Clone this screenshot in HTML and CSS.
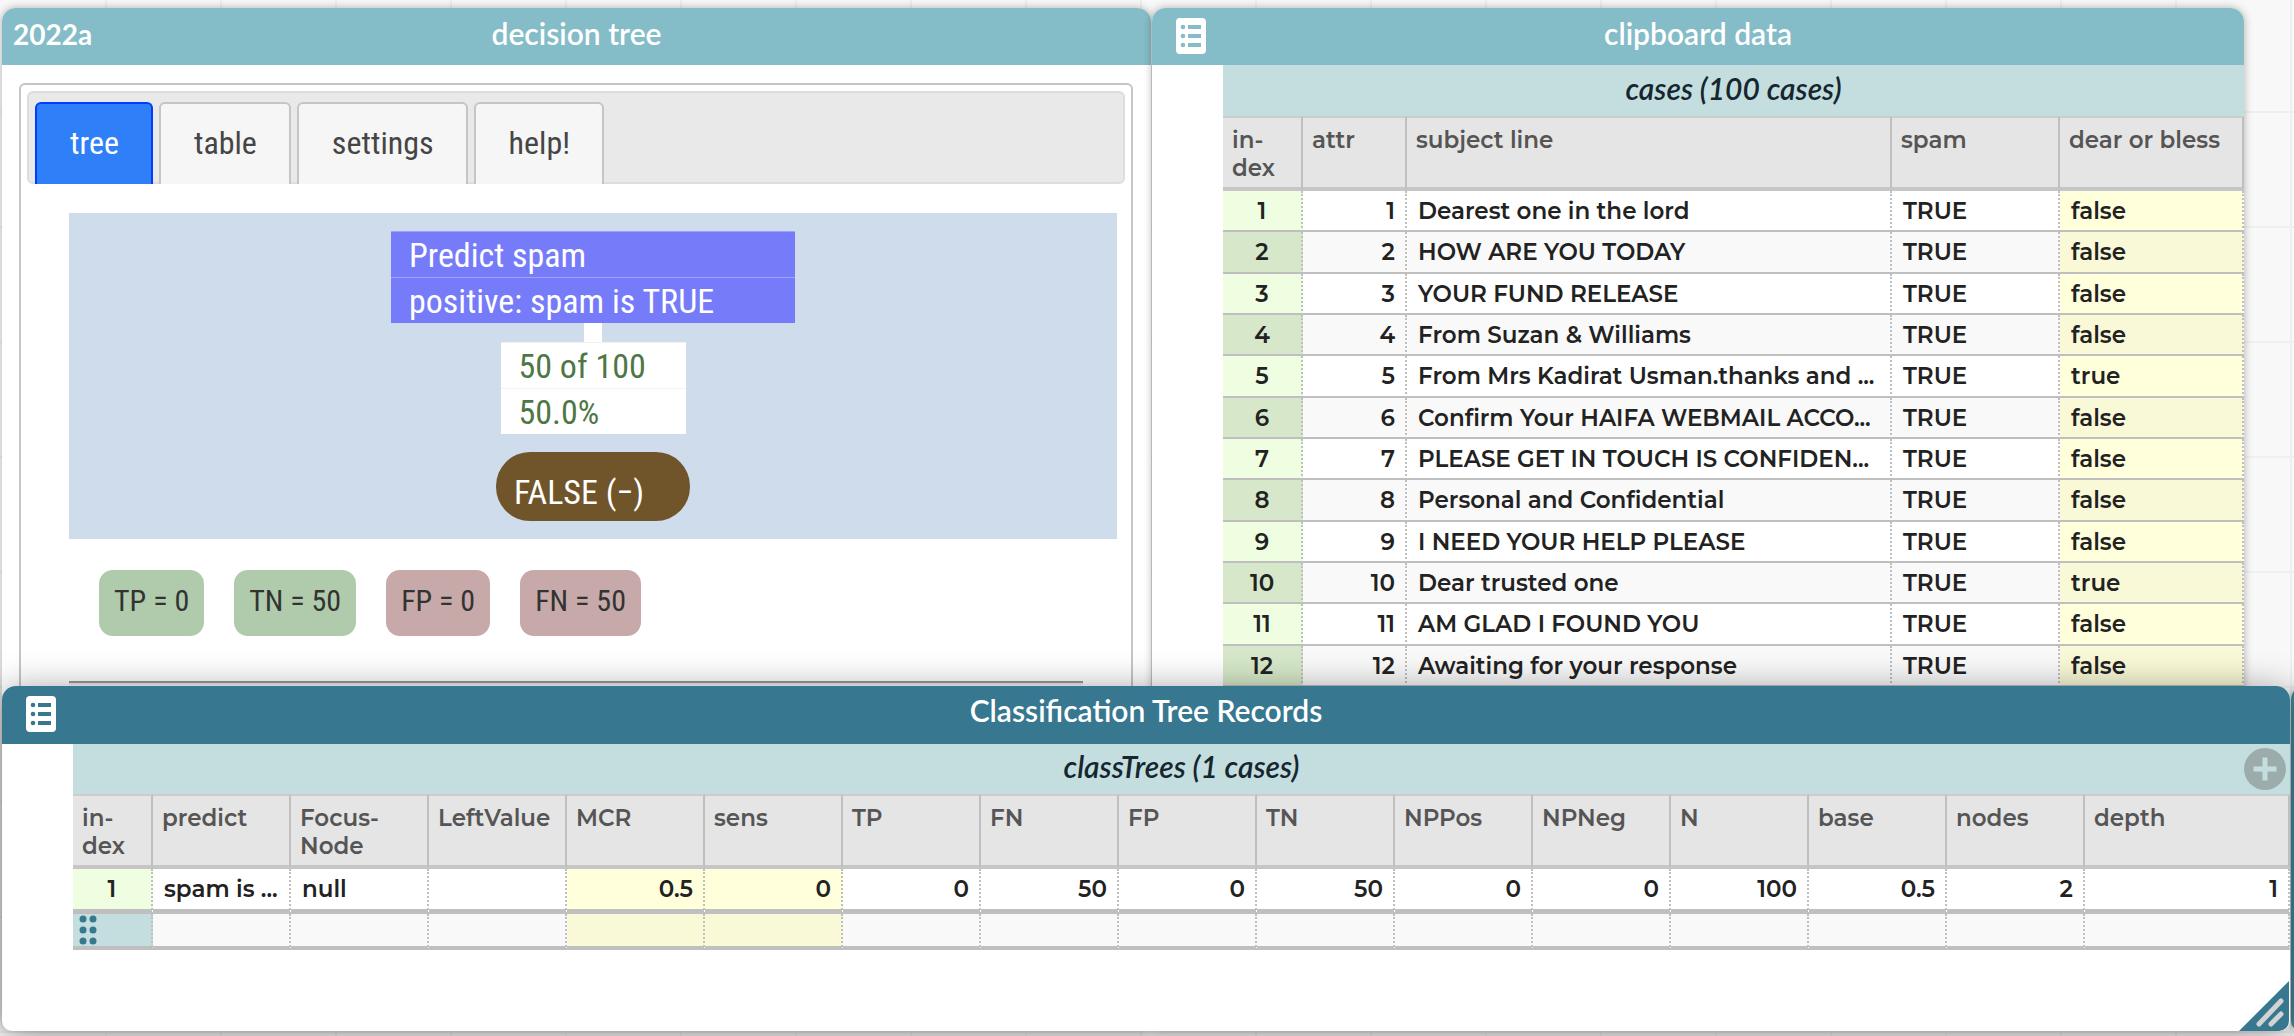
FILE: index.html
```html
<!DOCTYPE html>
<html lang="en">
<head>
<meta charset="utf-8">
<title>decision tree</title>
<link rel="stylesheet" href="styles.css">
</head>
<body>
<main class="desk">

  <section class="window window-tree">
    <header class="titlebar"><span class="version">2022a</span><h2 class="title">decision tree</h2></header>
    <div class="plugin">
      <div class="plugin-frame">
        <nav class="tabs">
          <button class="tab tab-on" type="button">tree</button>
          <button class="tab" type="button">table</button>
          <button class="tab" type="button">settings</button>
          <button class="tab" type="button">help!</button>
        </nav>
        <div class="tree">
          <div class="node-root"><div class="node-line">Predict spam</div><div class="node-line">positive: spam is TRUE</div></div>
          <div class="stem"></div>
          <div class="node-count"><div class="node-line">50 of 100</div><div class="node-line">50.0%</div></div>
          <div class="leaf">FALSE (−)</div>
        </div>
        <div class="chips">
          <span class="chip chip-good">TP = 0</span>
          <span class="chip chip-good">TN = 50</span>
          <span class="chip chip-bad">FP = 0</span>
          <span class="chip chip-bad">FN = 50</span>
        </div>
        <hr class="rule">
      </div>
    </div>
  </section>

  <section class="window window-data">
    <header class="titlebar">
      <button class="card-button" type="button" aria-label="Switch to case card">
        <svg width="30" height="36" viewBox="0 0 30 36"><rect width="30" height="36" rx="4" fill="#fff"/><g fill="currentColor"><circle cx="7" cy="9" r="2.300"/><circle cx="7" cy="18" r="2.300"/><circle cx="7" cy="27" r="2.300"/><path d="M12 7h13v4H12zM12 16h13v4H12zM12 25h13v4H12z"/></g></svg>
      </button>
      <h2 class="title">clipboard data</h2>
    </header>
    <div class="sheet">
      <div class="collection">cases (100 cases)</div>
      <table class="grid grid-cases">
        <colgroup><col class="c-index"><col class="c-attr"><col><col class="c-spam"><col class="c-dear"></colgroup>
        <thead><tr><th>in-<br>dex</th><th>attr</th><th>subject line</th><th>spam</th><th>dear or bless</th></tr></thead>
        <tbody>
          <tr><td class="idx">1</td><td class="num">1</td><td>Dearest one in the lord</td><td>TRUE</td><td class="calc">false</td></tr>
          <tr><td class="idx">2</td><td class="num">2</td><td>HOW ARE YOU TODAY</td><td>TRUE</td><td class="calc">false</td></tr>
          <tr><td class="idx">3</td><td class="num">3</td><td>YOUR FUND RELEASE</td><td>TRUE</td><td class="calc">false</td></tr>
          <tr><td class="idx">4</td><td class="num">4</td><td>From Suzan &amp; Williams</td><td>TRUE</td><td class="calc">false</td></tr>
          <tr><td class="idx">5</td><td class="num">5</td><td>From Mrs Kadirat Usman.thanks and ...</td><td>TRUE</td><td class="calc">true</td></tr>
          <tr><td class="idx">6</td><td class="num">6</td><td>Confirm Your HAIFA WEBMAIL ACCO...</td><td>TRUE</td><td class="calc">false</td></tr>
          <tr><td class="idx">7</td><td class="num">7</td><td>PLEASE GET IN TOUCH IS CONFIDEN...</td><td>TRUE</td><td class="calc">false</td></tr>
          <tr><td class="idx">8</td><td class="num">8</td><td>Personal and Confidential</td><td>TRUE</td><td class="calc">false</td></tr>
          <tr><td class="idx">9</td><td class="num">9</td><td>I NEED YOUR HELP PLEASE</td><td>TRUE</td><td class="calc">false</td></tr>
          <tr><td class="idx">10</td><td class="num">10</td><td>Dear trusted one</td><td>TRUE</td><td class="calc">true</td></tr>
          <tr><td class="idx">11</td><td class="num">11</td><td>AM GLAD I FOUND YOU</td><td>TRUE</td><td class="calc">false</td></tr>
          <tr><td class="idx">12</td><td class="num">12</td><td>Awaiting for your response</td><td>TRUE</td><td class="calc">false</td></tr>
        </tbody>
      </table>
    </div>
  </section>

  <section class="window window-edge"><header class="titlebar"></header></section>

  <section class="window window-records">
    <header class="titlebar">
      <button class="card-button" type="button" aria-label="Switch to case card">
        <svg width="30" height="36" viewBox="0 0 30 36"><rect width="30" height="36" rx="4" fill="#fff"/><g fill="currentColor"><circle cx="7" cy="9" r="2.300"/><circle cx="7" cy="18" r="2.300"/><circle cx="7" cy="27" r="2.300"/><path d="M12 7h13v4H12zM12 16h13v4H12zM12 25h13v4H12z"/></g></svg>
      </button>
      <h2 class="title">Classification Tree Records</h2>
    </header>
    <div class="sheet">
      <div class="collection">classTrees (1 cases)
        <button class="add" type="button" aria-label="Add attribute">
          <svg width="42" height="42" viewBox="0 0 42 42"><circle cx="21" cy="21" r="21" fill="#9cacac"/><path d="M21 9.500v23M9.500 21h23" stroke="#c4dedf" stroke-width="5"/></svg>
        </button>
      </div>
      <table class="grid grid-records">
        <colgroup><col class="c-index"><col class="c-std" span="14"><col></colgroup>
        <thead><tr><th>in-<br>dex</th><th>predict</th><th>Focus-<br>Node</th><th>LeftValue</th><th>MCR</th><th>sens</th><th>TP</th><th>FN</th><th>FP</th><th>TN</th><th>NPPos</th><th>NPNeg</th><th>N</th><th>base</th><th>nodes</th><th>depth</th></tr></thead>
        <tbody>
          <tr><td class="idx">1</td><td>spam is ...</td><td>null</td><td></td><td class="num calc">0.5</td><td class="num calc">0</td><td class="num">0</td><td class="num">50</td><td class="num">0</td><td class="num">50</td><td class="num">0</td><td class="num">0</td><td class="num">100</td><td class="num">0.5</td><td class="num">2</td><td class="num">1</td></tr>
          <tr class="input-row"><td class="grip"><svg width="18" height="28" viewBox="0 0 18 28" fill="#37778f"><circle cx="4" cy="3" r="3.500"/><circle cx="14" cy="3" r="3.500"/><circle cx="4" cy="14" r="3.500"/><circle cx="14" cy="14" r="3.500"/><circle cx="4" cy="25" r="3.500"/><circle cx="14" cy="25" r="3.500"/></svg></td><td></td><td></td><td></td><td class="calc"></td><td class="calc"></td><td></td><td></td><td></td><td></td><td></td><td></td><td></td><td></td><td></td><td></td></tr>
        </tbody>
      </table>
    </div>
    <svg class="resize" width="50" height="50" viewBox="0 0 50 50"><path d="M50 0v40a10 10 0 0 1-10 10H0z" fill="#37778f"/><path d="M20 43L42 20M32 43L42 33" stroke="#d3d3d3" stroke-width="5" stroke-linecap="round"/></svg>
  </section>

</main>
</body>
</html>
```
FILE: styles.css
```css
* { box-sizing: border-box; }
body { margin: 0; font-family: Montserrat, Inter, sans-serif; }

.desk {
  position: relative;
  height: 100vh;
  overflow: hidden;
  background-color: #f8f8f8;
  background-image:
    linear-gradient(90deg, #efefef 2px, transparent 2px),
    linear-gradient(#efefef 2px, transparent 2px);
  background-size: 115px 115px;
  background-position: 105px 111px;
}

/* windows on the canvas */
.window {
  position: absolute;
  background: #fff;
  border-radius: 14px 14px 10px 10px;
  box-shadow: 0 0 8px rgba(0, 0, 0, .3);
}
.window-tree { left: 2px; top: 8px; width: 1149px; bottom: 8px; }
.window-data { left: 1152px; top: 8px; width: 1092px; bottom: 8px; }
.window-records { left: 2px; top: 686px; right: 4px; bottom: 5px; box-shadow: 0 4px 36px rgba(0, 0, 0, .4); }
.window-edge { left: calc(100% - 3px); top: 686px; width: 300px; bottom: 5px; background: #3a879b; }

.titlebar {
  position: relative;
  display: flex;
  align-items: center;
  justify-content: center;
  height: 57px;
  padding-bottom: 8px;
  border-radius: 14px 14px 0 0;
  background: #84bcc8;
  color: #fff;
}
.window-records .titlebar, .window-edge .titlebar { height: 58px; padding-bottom: 10px; background: #37778f; }
.window-edge .titlebar { background: #3a879b; }
.title { margin: 0; font: 600 30px/34px "Museo Sans", Lato, sans-serif; }
.version { position: absolute; left: 11px; top: 9px; font: 700 28px/34px "Museo Sans", Lato, sans-serif; }
.card-button {
  position: absolute;
  left: 24px;
  top: 10px;
  display: flex;
  padding: 0;
  border: 0;
  background: none;
  color: #84bcc8;
}
.window-records .card-button { color: #37778f; }

/* decision tree plugin */
.plugin { padding: 18px 18px 0 17px; font-family: "Roboto Condensed", "Liberation Sans Narrow", Roboto, sans-serif; }
.plugin-frame { padding: 6px; height: 640px; border: 2px solid #c5c5c5; border-radius: 6px; }
.tabs {
  display: flex;
  gap: 6px;
  height: 93px;
  padding: 9px 6px 0;
  border: 2px solid #ddd;
  border-radius: 6px;
  background: #e9e9e9;
}
.tab {
  height: 82px;
  padding: 0 32px 2px 33px;
  border: 2px solid #c5c5c5;
  border-bottom: 0;
  border-radius: 6px 6px 0 0;
  background: #f6f6f6;
  color: #454545;
  font: 400 32px/38px "Roboto Condensed", "Liberation Sans Narrow", Roboto, sans-serif;
}
.tab-on { border-color: #003eff; background: #2f80f8; color: #fff; }
.tree {
  display: flex;
  flex-direction: column;
  align-items: center;
  height: 326px;
  margin: 29px 8px 0 42px;
  padding-top: 18px;
  background: #cfdcec;
  font-size: 34px;
}
.node-line { height: 46px; padding: 0 18px; line-height: 46px; border-top: 1px solid rgba(255, 255, 255, .3); white-space: nowrap; }
.node-root { width: 404px; background: #767bf9; color: #fff; }
.stem { width: 18px; height: 19px; background: #fff; }
.node-count { width: 185px; background: #fff; color: #4f7746; }
.node-count .node-line { border-color: #f2f2f2; }
.leaf { width: 194px; height: 69px; margin-top: 18px; padding: 18px 18px 0; border-radius: 34px; background: #70552a; color: #fff; line-height: 44px; white-space: nowrap; }
.chips { display: flex; gap: 30px; margin: 31px 0 45px 72px; }
.chip { height: 66px; padding: 0 15px; border-radius: 14px; font-size: 30px; line-height: 62px; color: #333; }
.chip-good { background: #b0cbac; }
.chip-bad { background: #c6a9a8; }
.rule { height: 4px; margin: 0 42px; border: 0; border-top: 2px solid #999; background: #eee; }

/* case tables */
.sheet { margin-left: 71px; }
.collection {
  position: relative;
  height: 51px;
  background: #c4dedf;
  color: #16262f;
  font: italic 600 30px/46px "Museo Sans", Lato, sans-serif;
  text-align: center;
}
.window-records .collection { height: 50px; line-height: 44px; }
.add { position: absolute; right: 4px; top: 4px; display: flex; padding: 0; border: 0; background: none; }
.grid { width: 100%; table-layout: fixed; border-collapse: separate; border-spacing: 0; }
.c-index { width: 80px; }
.c-attr { width: 104px; }
.c-spam { width: 168px; }
.c-dear { width: 184px; }
.c-std { width: 138px; }
.grid th {
  height: 75px;
  padding: 8px 0 0 9px;
  border-top: 2px solid #ccc;
  border-right: 2px solid #bfbfbf;
  border-bottom: 4px solid #c6c6c6;
  background: #e5e5e5;
  color: #555;
  font-size: 23px;
  font-weight: 600;
  line-height: 28px;
  text-align: left;
  vertical-align: top;
  white-space: nowrap;
}
.grid td {
  height: 41px;
  padding: 0 10px 0 11px;
  border-right: 2px dotted #bfbfbf;
  border-bottom: 2px solid #bfbfbf;
  background: #fff;
  color: #222;
  font-size: 23px;
  font-weight: 600;
  line-height: 28px;
  white-space: nowrap;
  overflow: hidden;
}
.grid-cases tr:nth-child(3n+2) td { height: 42px; }
.grid tr:nth-child(even) td { background: #f9f9f9; }
.grid td.idx { padding: 0; background: #effee1; text-align: center; }
.grid tr:nth-child(even) td.idx { background: #d6e8c9; }
.grid td.num { text-align: right; }
.grid td.calc { background: #ffffdc; }
.grid tr:nth-child(even) td.calc { background: #f9f9d7; }
.grid-records td { height: 45px; border-bottom-width: 5px; }
.grid .input-row td { height: 36px; border-bottom-width: 4px; }
.grid .input-row td.grip { padding: 0 0 0 6px; background: #c4dedf; }
.grip svg { display: block; overflow: visible; }
.resize { position: absolute; right: 1px; bottom: 0; }
```
